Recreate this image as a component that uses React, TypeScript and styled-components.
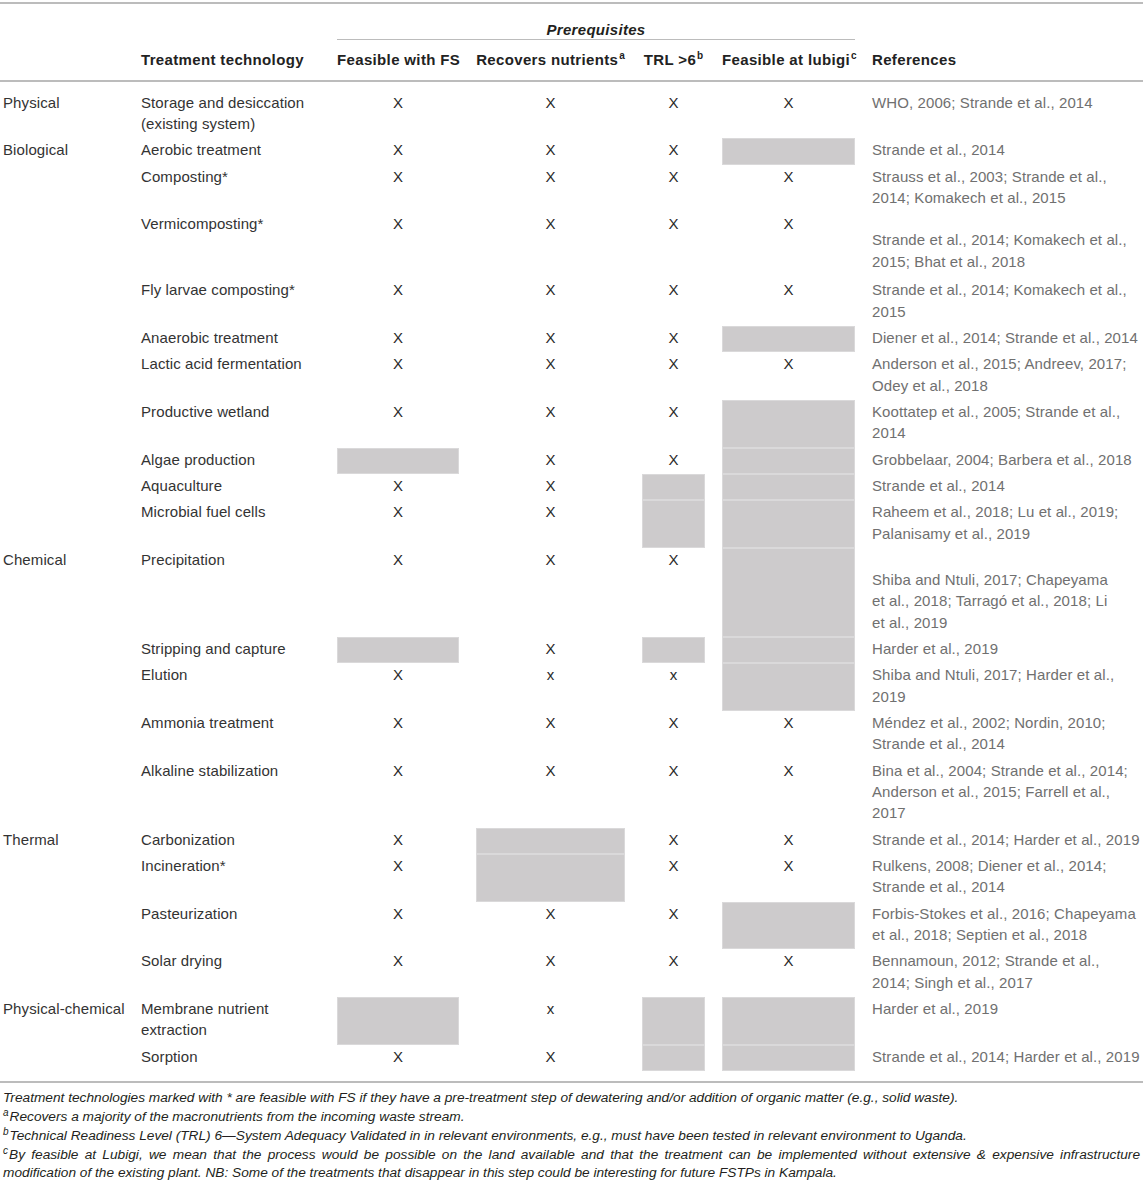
import React from "react";
import styled, { createGlobalStyle } from "styled-components";

const GlobalStyle = createGlobalStyle`
  html, body {
    margin: 0;
    padding: 0;
    background: #ffffff;
  }
  body {
    font-family: "Liberation Sans", Arial, Helvetica, sans-serif;
    color: #231f20;
    -webkit-font-smoothing: antialiased;
  }
`;

// category | treatment | FS | nutrients | TRL | lubigi | references
const COLUMNS = "124px 179px 122px 149px 63px 133px 1fr";

type Mark = "X" | "x" | null; // null = shaded out

interface Entry {
  category?: string;
  treatment: string[];
  marks: [Mark, Mark, Mark, Mark];
  refs: string[];
  refOffset?: number;
  minHeight?: number;
}

const rows: Entry[] = [
  {
    category: "Physical",
    treatment: ["Storage and desiccation", "(existing system)"],
    marks: ["X", "X", "X", "X"],
    refs: ["WHO, 2006; Strande et al., 2014"],
  },
  {
    category: "Biological",
    treatment: ["Aerobic treatment"],
    marks: ["X", "X", "X", null],
    refs: ["Strande et al., 2014"],
  },
  {
    treatment: ["Composting*"],
    marks: ["X", "X", "X", "X"],
    refs: ["Strauss et al., 2003; Strande et al.,", "2014; Komakech et al., 2015"],
  },
  {
    treatment: ["Vermicomposting*"],
    marks: ["X", "X", "X", "X"],
    refs: ["Strande et al., 2014; Komakech et al.,", "2015; Bhat et al., 2018"],
    refOffset: 16,
    minHeight: 66,
  },
  {
    treatment: ["Fly larvae composting*"],
    marks: ["X", "X", "X", "X"],
    refs: ["Strande et al., 2014; Komakech et al.,", "2015"],
  },
  {
    treatment: ["Anaerobic treatment"],
    marks: ["X", "X", "X", null],
    refs: ["Diener et al., 2014; Strande et al., 2014"],
  },
  {
    treatment: ["Lactic acid fermentation"],
    marks: ["X", "X", "X", "X"],
    refs: ["Anderson et al., 2015; Andreev, 2017;", "Odey et al., 2018"],
  },
  {
    treatment: ["Productive wetland"],
    marks: ["X", "X", "X", null],
    refs: ["Koottatep et al., 2005; Strande et al.,", "2014"],
  },
  {
    treatment: ["Algae production"],
    marks: [null, "X", "X", null],
    refs: ["Grobbelaar, 2004; Barbera et al., 2018"],
  },
  {
    treatment: ["Aquaculture"],
    marks: ["X", "X", null, null],
    refs: ["Strande et al., 2014"],
  },
  {
    treatment: ["Microbial fuel cells"],
    marks: ["X", "X", null, null],
    refs: ["Raheem et al., 2018; Lu et al., 2019;", "Palanisamy et al., 2019"],
  },
  {
    category: "Chemical",
    treatment: ["Precipitation"],
    marks: ["X", "X", "X", null],
    refs: [
      "Shiba and Ntuli, 2017; Chapeyama",
      "et al., 2018; Tarragó et al., 2018; Li",
      "et al., 2019",
    ],
    refOffset: 20,
    minHeight: 88,
  },
  {
    treatment: ["Stripping and capture"],
    marks: [null, "X", null, null],
    refs: ["Harder et al., 2019"],
  },
  {
    treatment: ["Elution"],
    marks: ["X", "x", "x", null],
    refs: ["Shiba and Ntuli, 2017; Harder et al.,", "2019"],
  },
  {
    treatment: ["Ammonia treatment"],
    marks: ["X", "X", "X", "X"],
    refs: ["Méndez et al., 2002; Nordin, 2010;", "Strande et al., 2014"],
  },
  {
    treatment: ["Alkaline stabilization"],
    marks: ["X", "X", "X", "X"],
    refs: [
      "Bina et al., 2004; Strande et al., 2014;",
      "Anderson et al., 2015; Farrell et al.,",
      "2017",
    ],
  },
  {
    category: "Thermal",
    treatment: ["Carbonization"],
    marks: ["X", null, "X", "X"],
    refs: ["Strande et al., 2014; Harder et al., 2019"],
  },
  {
    treatment: ["Incineration*"],
    marks: ["X", null, "X", "X"],
    refs: ["Rulkens, 2008; Diener et al., 2014;", "Strande et al., 2014"],
  },
  {
    treatment: ["Pasteurization"],
    marks: ["X", "X", "X", null],
    refs: ["Forbis-Stokes et al., 2016; Chapeyama", "et al., 2018; Septien et al., 2018"],
  },
  {
    treatment: ["Solar drying"],
    marks: ["X", "X", "X", "X"],
    refs: ["Bennamoun, 2012; Strande et al.,", "2014; Singh et al., 2017"],
  },
  {
    category: "Physical-chemical",
    treatment: ["Membrane nutrient", "extraction"],
    marks: [null, "x", null, null],
    refs: ["Harder et al., 2019"],
  },
  {
    treatment: ["Sorption"],
    marks: ["X", "X", null, null],
    refs: ["Strande et al., 2014; Harder et al., 2019"],
  },
];

const Page = styled.div`
  width: 1143px;
  padding-top: 2px;
  font-size: 15px;
  line-height: 21.33px;
  letter-spacing: 0.1px;
`;

const Rule = styled.div`
  height: 2px;
  background: #bcbcbc;
`;

const Grid = styled.div`
  display: grid;
  grid-template-columns: ${COLUMNS};
  column-gap: 17px;
`;

const GroupRow = styled(Grid)`
  padding-top: 16px;
`;

const GroupLabel = styled.div`
  grid-column: 3 / 7;
  text-align: center;
  font-weight: bold;
  font-style: italic;
  letter-spacing: 0.3px;
  line-height: 19px;
  border-bottom: 1px solid #bcbcbc;
`;

const LabelRow = styled(Grid)`
  padding: 8.5px 0 10.5px;
`;

const HeadCell = styled.div<{ $center?: boolean }>`
  font-weight: bold;
  letter-spacing: 0.35px;
  white-space: nowrap;
  color: #222;
  text-align: ${(p) => (p.$center ? "center" : "left")};

  sup {
    font-size: 10px;
    line-height: 0;
    vertical-align: 6px;
    margin-left: 1px;
    letter-spacing: 0;
  }
`;

const Body = styled.div`
  padding: 8.5px 0 10px;
`;

const Row = styled(Grid)<{ $min?: number }>`
  min-height: ${(p) => (p.$min ? `${p.$min}px` : "auto")};
`;

const Cell = styled.div`
  padding: 1px 0 4px;
  white-space: nowrap;
`;

const Category = styled(Cell)`
  padding-left: 3px;
  color: #333;
`;

const Treatment = styled(Cell)`
  color: #333;
`;

const MarkCell = styled(Cell)<{ $shaded: boolean }>`
  text-align: center;
  color: #2a2a2a;
  background: ${(p) => (p.$shaded ? "#cdcbcc" : "transparent")};
  box-shadow: ${(p) => (p.$shaded ? "inset 0 0 0 1px #dad9da" : "none")};
`;

const Refs = styled(Cell)<{ $offset?: number }>`
  padding-top: ${(p) => 1 + (p.$offset ?? 0)}px;
  color: #707070;
`;

const Notes = styled.div`
  padding: 6.5px 3px 0;
  font-size: 13.7px;
  line-height: 18.7px;
  letter-spacing: 0;
  font-style: italic;
  color: #231f20;

  sup {
    font-size: 10px;
    line-height: 0;
    vertical-align: 5px;
    margin-right: 1px;
  }
`;

const JustifiedLine = styled.span`
  display: block;
  text-align: justify;
  text-align-last: justify;
`;

const Lines = ({ items }: { items: string[] }) => (
  <>
    {items.map((t, i) => (
      <React.Fragment key={i}>
        {i > 0 && <br />}
        {t}
      </React.Fragment>
    ))}
  </>
);

export default function App() {
  return (
    <>
      <GlobalStyle />
      <Page>
        <Rule />
        <GroupRow>
          <GroupLabel>Prerequisites</GroupLabel>
        </GroupRow>
        <LabelRow>
          <HeadCell />
          <HeadCell>Treatment technology</HeadCell>
          <HeadCell $center>Feasible with FS</HeadCell>
          <HeadCell $center>
            Recovers nutrients<sup>a</sup>
          </HeadCell>
          <HeadCell $center>
            TRL &gt;6<sup>b</sup>
          </HeadCell>
          <HeadCell $center>
            Feasible at lubigi<sup>c</sup>
          </HeadCell>
          <HeadCell>References</HeadCell>
        </LabelRow>
        <Rule />
        <Body>
          {rows.map((r, i) => (
            <Row key={i} $min={r.minHeight}>
              <Category>{r.category ?? ""}</Category>
              <Treatment>
                <Lines items={r.treatment} />
              </Treatment>
              {r.marks.map((m, j) => (
                <MarkCell key={j} $shaded={m === null}>
                  {m ?? ""}
                </MarkCell>
              ))}
              <Refs $offset={r.refOffset}>
                <Lines items={r.refs} />
              </Refs>
            </Row>
          ))}
        </Body>
        <Rule />
        <Notes>
          <div>
            Treatment technologies marked with * are feasible with FS if they have a pre-treatment
            step of dewatering and/or addition of organic matter (e.g., solid waste).
          </div>
          <div>
            <sup>a</sup>Recovers a majority of the macronutrients from the incoming waste stream.
          </div>
          <div>
            <sup>b</sup>Technical Readiness Level (TRL) 6—System Adequacy Validated in in relevant
            environments, e.g., must have been tested in relevant environment to Uganda.
          </div>
          <div>
            <JustifiedLine>
              <sup>c</sup>By feasible at Lubigi, we mean that the process would be possible on the
              land available and that the treatment can be implemented without extensive &amp;
              expensive infrastructure
            </JustifiedLine>
            modification of the existing plant. NB: Some of the treatments that disappear in this
            step could be interesting for future FSTPs in Kampala.
          </div>
        </Notes>
      </Page>
    </>
  );
}
